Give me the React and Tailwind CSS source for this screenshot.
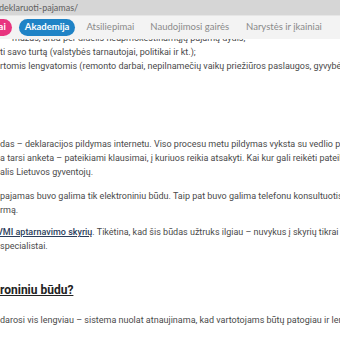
import React from 'react';

const body = { fontFamily: 'Roboto, "Noto Sans", sans-serif' };
const navFont = { fontFamily: 'Lato, "Open Sans", sans-serif' };

function Nav() {
  return (
    <nav className="relative z-10 flex h-[23px] items-center bg-[#f3f3f3] text-[9.5px] text-[#8a8a8a]" style={navFont}>
      <span className="-ml-[44px] shrink-0 rounded-full bg-[#e8347f] px-[6px] py-[1px] font-bold text-white">Straipsniai</span>
      <span className="ml-[7px] shrink-0 rounded-full bg-[#1f83c6] px-[6px] py-[1px] font-bold text-white">Akademija</span>
      <span className="ml-[11px] shrink-0">Atsiliepimai</span>
      <span className="ml-[16px] shrink-0">Naudojimosi gairės</span>
      <span className="ml-[17px] shrink-0">Narystės ir įkainiai</span>
    </nav>
  );
}

export default function App() {
  return (
    <div className="h-[340px] w-[340px] overflow-hidden bg-white">
      <div className="flex h-[16px] items-center border-b border-[#e6e6e6] bg-[#d6d6d6] text-[9px] text-[#606060]" style={navFont}>
        <span className="-ml-[1px] whitespace-nowrap">deklaruoti-pajamas/</span>
      </div>
      <Nav />

      <div className="-mt-[8px] whitespace-nowrap text-[9px] leading-[14px] text-[#4a4a4a]" style={body}>
        <p className="pl-[12px]">mažas, arba per didelis neapmokestinamųjų pajamų dydis,</p>
        <p>ti savo turtą (valstybės tarnautojai, politikai ir kt.);</p>
        <p>rtomis lengvatomis (remonto darbai, nepilnamečių vaikų priežiūros paslaugos, gyvybės draudimas);</p>

        <div className="mt-[64px]">
          <p>das – deklaracijos pildymas internetu. Viso procesu metu pildymas vyksta su vedlio pagalba.</p>
          <p>a tarsi anketa – pateikiami klausimai, į kuriuos reikia atsakyti. Kai kur gali reikėti pateikti</p>
          <p>alis Lietuvos gyventojų.</p>
        </div>

        <div className="mt-[10px]">
          <p>pajamas buvo galima tik elektroniniu būdu. Taip pat buvo galima telefonu konsultuotis</p>
          <p>rmą.</p>
        </div>

        <div className="mt-[8px]">
          <p className="-ml-[3px]">
            <a className="font-medium text-[#2c3e5c] underline">VMI aptarnavimo skyrių</a>. Tikėtina, kad šis būdas užtruks ilgiau – nuvykus į skyrių tikrai
          </p>
          <p>specialistai.</p>
        </div>

        <h2 className="mt-[29px] text-[12px] font-bold leading-[16px] text-[#222] underline">roniniu būdu?</h2>

        <p className="mt-[15px]">darosi vis lengviau – sistema nuolat atnaujinama, kad vartotojams būtų patogiau ir lengviau</p>
      </div>
    </div>
  );
}
